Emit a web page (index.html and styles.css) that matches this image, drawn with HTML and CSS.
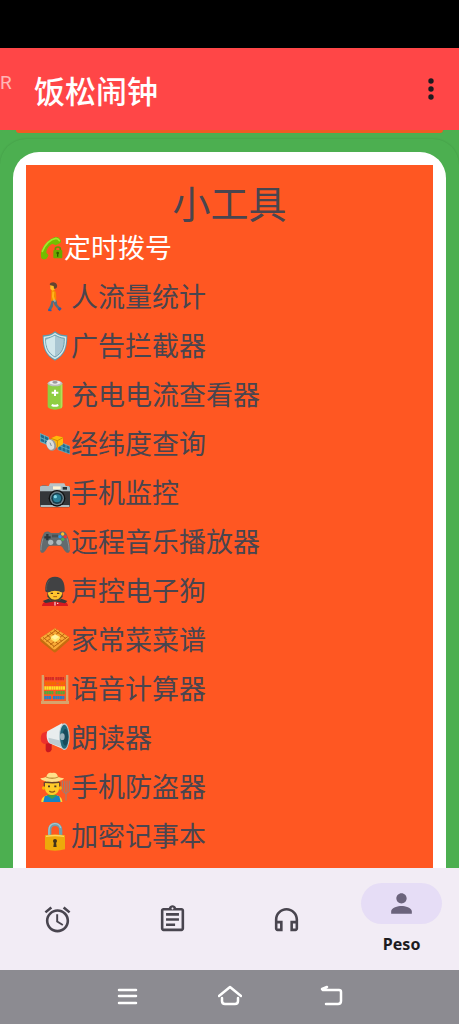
FILE: index.html
```
<!DOCTYPE html>
<html lang="zh-CN">
<head>
    <meta charset="UTF-8">
    <meta name="viewport" content="width=device-width, initial-scale=1.0">
    <title>饭松闹钟</title>
    <link rel="stylesheet" href="styles.css">
</head>
<body>
    <div class="status-bar"></div>
    <header class="app-bar">
        <span class="ticker">R</span>
        <h1>饭松闹钟</h1>
        <button class="menu-button" aria-label="更多">
            <svg viewBox="0 0 8 22"><circle cx="4" cy="3" r="2.7"/><circle cx="4" cy="11" r="2.7"/><circle cx="4" cy="19" r="2.7"/></svg>
        </button>
    </header>

    <main class="content">
        <div class="previous-card"></div>
        <section class="card">
            <div class="card-frame">
                <div class="tools">
                    <h2>小工具</h2>
                    <ul class="tool-list">
                        <li><a class="tool active" href="#dial">
                            <svg class="small-icon" viewBox="0 0 72 72">
                                <path d="M4 66C-3 46 18 12 44 4c9-3 14 1 18 8 2 5 1 8-3 10l-10 5c-5 2-7-4-12-3-10 4-17 15-18 25 0 5 7 5 6 10l-4 7c-3 5-14 6-17 0z" fill="#74bd00"/>
                                <path d="M7 46C16 24 31 10 48 7c5 0 8 3 10 7" fill="none" stroke="#a4e62c" stroke-width="5" stroke-linecap="round"/>
                                <path d="M46 44v-5c0-8 15-8 15 0v5" fill="none" stroke="#5c9900" stroke-width="5"/>
                                <rect x="40" y="42" width="27" height="25" rx="3" fill="#69aa00"/>
                                <circle cx="53" cy="51" r="4" fill="#345c00"/><path d="M51 53h4v9h-4z" fill="#345c00"/>
                            </svg>
                            定时拨号</a></li>
                        <li><a class="tool" href="#people">
                            <svg class="icon" viewBox="0 0 90 90">
                                <path d="M36 53h13l3 15 10 11-6 5-12-14-4-10-1 13-7 13-8-3 7-13z" fill="#536f7f"/>
                                <path d="M26 80l9 4-1 4-10-1zM53 82l7-7 5 5-6 7z" fill="#315aa8"/>
                                <path d="M34 24c7-3 13 1 14 9l1 23H33z" fill="#f58a00"/>
                                <path d="M40 29l-1 15 4 12" fill="none" stroke="#ffb51c" stroke-width="6"/>
                                <path d="M42 53l4 6" stroke="#8eb0b9" stroke-width="5"/>
                                <path d="M31 8h14v14l-7 4-7-5z" fill="#ffbe25"/>
                                <path d="M29 7C31-1 48-2 51 9c2 8-4 13-9 11l-1-8-10-2z" fill="#634331"/>
                            </svg>
                            人流量统计</a></li>
                        <li><a class="tool" href="#adblock">
                            <svg class="icon" viewBox="0 0 90 90">
                                <path d="M45 1C35 10 20 13 8 13c0 37 7 61 37 76 30-15 37-39 37-76C70 13 55 10 45 1z" fill="#5c9db1"/>
                                <path d="M45 5C35 13 23 16 11 17c0 33 7 54 34 68 27-14 34-35 34-68C67 16 55 13 45 5z" fill="#d6e6e9"/>
                                <path d="M45 12c-9 6-18 9-28 10 0 28 6 44 28 56 22-12 28-28 28-56-10-1-19-4-28-10z" fill="#a9c6d2" stroke="#6ca0ae" stroke-width="3"/>
                                <path d="M45 14v62C25 65 19 49 18 27z" fill="#d1e7eb"/>
                            </svg>
                            广告拦截器</a></li>
                        <li><a class="tool" href="#battery">
                            <svg class="icon" viewBox="0 0 90 90">
                                <path d="M23 11h44v67c0 6-9 11-22 11s-22-5-22-11z" fill="#8fce42"/>
                                <path d="M62 13h5v65c0 4-2 6-5 8z" fill="#b2df59"/>
                                <ellipse cx="45" cy="10" rx="22" ry="9" fill="#bdbdbd"/><ellipse cx="45" cy="8" rx="17" ry="6" fill="#eee"/>
                                <ellipse cx="45" cy="7" rx="8" ry="4" fill="#999"/>
                                <path d="M45 29v19M35 38h20M35 75c6 3 14 3 20 0" fill="none" stroke="#fff" stroke-width="6"/>
                            </svg>
                            充电电流查看器</a></li>
                        <li><a class="tool" href="#location">
                            <svg class="icon" viewBox="0 0 90 90">
                                <path d="M0 12l27 12-1 26L0 39z" fill="#6db0bd"/><path d="M2 16l10 4v9L2 25zm12 5l11 5v9l-11-5zM2 28l10 4v8L2 37zm12 5l11 5v8l-11-4zM55 38l35 14-1 23-35-13z" fill="#226c8d"/>
                                <path d="M54 37l36 15v23L54 62zM66 42v24M78 47v24M54 49l36 14" fill="none" stroke="#6fbaca" stroke-width="2"/>
                                <path d="M33 28l16-8 20 5v21L52 56 33 48z" fill="#ffba0a"/><path d="M33 28l19 7 17-9M52 35v20" fill="none" stroke="#d48a00" stroke-width="3"/>
                                <ellipse cx="34" cy="48" rx="14" ry="18" transform="rotate(-22 34 48)" fill="#999"/>
                                <ellipse cx="31" cy="47" rx="11" ry="16" transform="rotate(-22 31 47)" fill="#dadddd"/><path d="M34 51l-4-10" stroke="#829097" stroke-width="3"/>
                            </svg>
                            经纬度查询</a></li>
                        <li><a class="tool" href="#monitor">
                            <svg class="icon" viewBox="0 0 90 90">
                                <path d="M5 22h15v6H5z" fill="#667a83"/><path d="M30 16h43l5 10H25z" fill="#b7c4c8"/>
                                <rect y="24" width="90" height="64" rx="5" fill="#34373a"/><path d="M4 24h82c3 0 4 3 4 6v10H0V28c0-3 2-4 4-4zM2 81h86v6H2z" fill="#aebdc2"/>
                                <rect x="39" y="25" width="23" height="9" fill="#fff3d2"/><rect x="68" y="27" width="13" height="8" fill="#263238"/>
                                <circle cx="51" cy="61" r="25" fill="#111"/><circle cx="51" cy="61" r="21" fill="#71828b"/><circle cx="51" cy="61" r="17" fill="#173d4a"/>
                                <circle cx="51" cy="61" r="12" fill="#287d96"/><circle cx="46" cy="56" r="5" fill="#82d6e6"/>
                            </svg>
                            手机监控</a></li>
                        <li><a class="tool" href="#music">
                            <svg class="icon" viewBox="0 0 90 90">
                                <path d="M14 16c7-5 14-2 19 2h24c6-5 14-6 20-1 9 10 15 44 12 56-4 9-12 4-19-8-4-7-6-9-11-9H31c-5 0-7 2-11 9C13 77 5 82 1 73-2 60 5 25 14 16z" fill="#636b6e"/>
                                <path d="M9 34C5 48 2 62 3 70M81 34c4 14 7 28 6 36" fill="none" stroke="#8b9294" stroke-width="3"/>
                                <path d="M22 21v19M13 31h19" stroke="#303639" stroke-width="7"/><path d="M36 23h18v8H36z" fill="#485052"/>
                                <circle cx="32" cy="46" r="8" fill="#aeb9bc"/><circle cx="57" cy="46" r="8" fill="#aeb9bc"/>
                                <circle cx="68" cy="21" r="5" fill="#fbc02d"/><circle cx="60" cy="29" r="5" fill="#2196f3"/><circle cx="76" cy="29" r="5" fill="#ef3434"/><circle cx="68" cy="37" r="5" fill="#4caf50"/>
                            </svg>
                            远程音乐播放器</a></li>
                        <li><a class="tool" href="#guard">
                            <svg class="icon" viewBox="0 0 90 90">
                                <path d="M6 90c0-11 12-17 26-19h26c15 2 26 8 26 19z" fill="#d71920"/><path d="M8 75l22-8 15 10 15-10 22 8-7 7-30-6-28 5z" fill="#353b3e"/>
                                <path d="M24 43h42v20c-5 17-37 17-42 0z" fill="#ffc52e"/><path d="M22 48c4 16 12 23 23 23s19-7 23-23v14L56 76H34L22 62z" fill="#4a4030"/>
                                <path d="M16 45C15 17 24 2 45 2s30 15 29 43c-5 8-12 3-18 1-9-2-14-2-22 0-6 3-14 6-18-1z" fill="#414244"/>
                                <path d="M28 13c-8 7-9 18-8 29" fill="none" stroke="#555" stroke-width="3"/>
                                <path d="M32 52h7M51 52h7" stroke="#51351d" stroke-width="4"/><path d="M40 62h11" stroke="#a85b15" stroke-width="3"/>
                                <path d="M45 78v11M51 82h4" stroke="#fff" stroke-width="3"/>
                            </svg>
                            声控电子狗</a></li>
                        <li><a class="tool" href="#recipes">
                            <svg class="icon" viewBox="0 0 90 90">
                                <path d="M1 39l44-29 43 27v9L48 81q-4 3-8-1L1 49z" fill="#c56c0f"/><path d="M1 39l44-29 43 27-41 35q-4 3-8 0z" fill="#f9a936"/>
                                <path d="M9 37l33 27M20 29l35 28M31 22l35 27M42 14l36 27M19 50l41-31M31 59l42-32M39 67l44-32M10 43l40-29" fill="none" stroke="#b9640f" stroke-width="3"/>
                                <path d="M32 36l14-9 14 9-1 7-14 9-13-10z" fill="#ffe66b"/><path d="M34 36l12-7 11 7-12 8z" fill="#fff3a1"/>
                            </svg>
                            家常菜菜谱</a></li>
                        <li><a class="tool" href="#calculator">
                            <svg class="icon" viewBox="0 0 90 90">
                                <path d="M9 14h72M9 28h72M9 42h72M9 56h72M9 71h72" stroke="#b17943" stroke-width="2"/>
                                <path d="M15 14h27M46 14h26" stroke="#d52b25" stroke-width="10" stroke-dasharray="6 1"/>
                                <path d="M15 28h34M56 28h19" stroke="#f66a00" stroke-width="10" stroke-dasharray="6 1"/>
                                <path d="M13 42h62" stroke="#ffdf25" stroke-width="10" stroke-dasharray="6 1"/>
                                <path d="M13 56h27M47 56h28" stroke="#55a83b" stroke-width="10" stroke-dasharray="6 1"/>
                                <path d="M13 71h20M39 71h34" stroke="#2381cb" stroke-width="10" stroke-dasharray="6 1"/>
                                <path d="M5 3h7v79H5zM78 3h7v79h-7zM3 81h84v9H3z" fill="#d8a46c"/>
                            </svg>
                            语音计算器</a></li>
                        <li><a class="tool" href="#reader">
                            <svg class="icon" viewBox="0 0 90 90">
                                <path d="M17 59l18-2v22c-2 11-16 12-18 2z" fill="#c91820"/><path d="M24 24L8 30C1 37 1 50 5 58l7 5 18-3z" fill="#ed302c"/>
                                <path d="M22 25L66 1c16 18 20 58 8 79L27 60c-7-8-9-23-5-35z" fill="#e8edee"/><path d="M25 44l39 9v20L28 60z" fill="#bdcbd0"/>
                                <ellipse cx="73" cy="41" rx="16" ry="40" fill="#b7cbd1"/><ellipse cx="73" cy="41" rx="13" ry="36" fill="#22697a"/>
                                <ellipse cx="76" cy="43" rx="9" ry="25" fill="#174b5b"/><ellipse cx="67" cy="41" rx="7" ry="10" fill="#9bb4bd"/>
                            </svg>
                            朗读器</a></li>
                        <li><a class="tool" href="#security">
                            <svg class="icon" viewBox="0 0 90 90">
                                <path d="M4 90c0-16 11-22 32-21 20-1 30 5 31 21z" fill="#fdd835"/><path d="M14 73l11-3 11 7 12-7 10 3 4 17H10z" fill="#1684c4"/>
                                <path d="M20 70l16 11 16-11-16-5z" fill="#43a047"/><path d="M11 30h50v17H11z" fill="#71472e"/>
                                <path d="M15 27h42v24c-4 24-38 24-42 0z" fill="#ffca28"/><circle cx="11" cy="48" r="5" fill="#ffb300"/><circle cx="61" cy="48" r="5" fill="#ffb300"/>
                                <path d="M15 28h42v5c-16 2-29 1-42 0z" fill="#65412b"/>
                                <path d="M1 19c7-2 14-2 18-5C23 3 27 1 36 3c9-3 15 0 18 11 5 3 11 3 18 5-6 8-20 11-36 11S6 27 1 19z" fill="#ffe08a"/>
                                <path d="M18 15c12 5 24 5 37 0" fill="none" stroke="#c5943f" stroke-width="4"/>
                                <path d="M24 43h6M43 43h6" stroke="#4d3728" stroke-width="5"/><path d="M28 57q8 7 17 0" fill="none" stroke="#8d5518" stroke-width="4"/>
                                <path d="M67 26v31q11 14 21 0V26M74 26v35M81 26v35M78 60v26" fill="none" stroke="#92847b" stroke-width="3"/>
                            </svg>
                            手机防盗器</a></li>
                        <li><a class="tool" href="#notes">
                            <svg class="icon" viewBox="0 0 90 90">
                                <path d="M29 47V27c0-23 33-23 33 0v20" fill="none" stroke="#719fac" stroke-width="10"/><path d="M27 45V27C27 3 58 2 62 21" fill="none" stroke="#a6c7cd" stroke-width="4"/>
                                <path d="M15 43q30-5 60 0v42q-30 8-60 0z" fill="#edaa0b"/><path d="M18 46q27-5 54 0" fill="none" stroke="#ffd45a" stroke-width="4"/>
                                <circle cx="45" cy="60" r="6" fill="#41331a"/><path d="M42 62h6l2 16H40z" fill="#41331a"/>
                            </svg>
                            加密记事本</a></li>
                    </ul>
                </div>
            </div>
        </section>
    </main>

    <nav class="tab-bar">
        <a href="#alarm" aria-label="闹钟">
            <svg viewBox="0 0 24 24"><path d="M22 5.72l-4.6-3.86-1.29 1.53 4.6 3.86L22 5.72zM7.88 3.39L6.6 1.86 2 5.71l1.29 1.53 4.59-3.85zM12.5 8H11v6l4.75 2.85.75-1.23-4-2.37V8zM12 4c-4.97 0-9 4.03-9 9s4.02 9 9 9a9 9 0 000-18zm0 16c-3.87 0-7-3.13-7-7s3.13-7 7-7 7 3.13 7 7-3.13 7-7 7z"/></svg>
        </a>
        <a href="#tasks" aria-label="任务">
            <svg viewBox="0 0 24 24"><path d="M7 15h7v2H7zm0-4h10v2H7zm0-4h10v2H7zm12-4h-4.18C14.4 1.84 13.3 1 12 1s-2.4.84-2.82 2H5c-1.1 0-2 .9-2 2v14c0 1.1.9 2 2 2h14c1.1 0 2-.9 2-2V5c0-1.1-.9-2-2-2zm-7-.25c.41 0 .75.34.75.75s-.34.75-.75.75-.75-.34-.75-.75.34-.75.75-.75zM19 19H5V5h14v14z"/></svg>
        </a>
        <a href="#audio" aria-label="音频">
            <svg viewBox="0 0 24 24"><path d="M12 3c-4.97 0-9 4.03-9 9v7c0 1.1.9 2 2 2h4v-8H5v-1c0-3.87 3.13-7 7-7s7 3.13 7 7v1h-4v8h4c1.1 0 2-.9 2-2v-7c0-4.97-4.03-9-9-9zM7 15v4H5v-4h2zm12 4h-2v-4h2v4z"/></svg>
        </a>
        <a class="selected" href="#peso">
            <span class="pill">
                <svg viewBox="0 0 24 24"><path d="M12 12c2.21 0 4-1.79 4-4s-1.79-4-4-4-4 1.79-4 4 1.79 4 4 4zm0 2c-2.67 0-8 1.34-8 4v2h16v-2c0-2.66-5.33-4-8-4z"/></svg>
            </span>
            Peso
        </a>
    </nav>

    <div class="system-bar">
        <button aria-label="最近任务"><svg viewBox="0 0 24 24"><path d="M3 5h17M3 11h17M3 18h17"/></svg></button>
        <button aria-label="主页"><svg viewBox="0 0 24 24"><path d="M1 11L12 2l11 9M4 13v3q0 3 3 3h10q3 0 3-3v-3"/></svg></button>
        <button aria-label="返回"><svg viewBox="0 0 24 24"><path d="M7 2L2 4l1 1h16q2 0 2 2v9q0 3-3 3H6"/></svg></button>
    </div>
</body>
</html>
```

FILE: styles.css
```
:root {
    --red: #ff4647;
    --green: #4caf50;
    --orange: #ff5722;
    --text: #49454f;
    --tab-bg: #f2ecf5;
}

* {
    box-sizing: border-box;
}

body {
    display: flex;
    flex-direction: column;
    height: 100vh;
    margin: 0;
    overflow: hidden;
    background-color: var(--green);
    color: var(--text);
    font-family: "Noto Sans", "Noto Sans CJK SC", sans-serif;
}

h1, h2, ul {
    margin: 0;
    padding: 0;
    font-weight: normal;
}

a {
    color: inherit;
    text-decoration: none;
}

button {
    padding: 0;
    border: none;
    background: none;
}

svg {
    display: block;
}

.status-bar {
    flex: none;
    height: 48px;
    background-color: #000;
}

.app-bar {
    display: flex;
    flex: none;
    align-items: center;
    height: 82px;
    padding-right: 24px;
    background-color: var(--red);
    color: #fff;
}

.ticker {
    width: 34px;
    padding-bottom: 12px;
    font-family: Roboto, sans-serif;
    font-size: 19px;
    line-height: 24px;
    opacity: 0.6;
}

.app-bar h1 {
    flex: 1;
    padding-top: 4px;
    font-size: 31px;
    font-weight: 500;
    line-height: 40px;
}

.menu-button svg {
    width: 8px;
    height: 22px;
    fill: #1d1b20;
}

.content {
    flex: 1;
    min-height: 0;
    overflow: hidden;
}

.previous-card {
    height: 3px;
    margin: 0 16px;
    background-color: #f15a24;
    border-radius: 0 0 12px 12px;
}

.card {
    margin-top: 6px;
    padding: 13px 13px 0;
    border-radius: 26px;
    box-shadow: 0 0 2px rgba(0, 0, 0, 0.15);
}

.card-frame {
    padding: 13px;
    background-color: #fff;
    border-radius: 26px;
}

.tools {
    padding: 12px 14px 24px;
    background-color: var(--orange);
}

.tools h2 {
    font-size: 38px;
    line-height: 52px;
    text-align: center;
}

.tool-list {
    margin-top: -6px;
    list-style: none;
}

.tool {
    display: flex;
    align-items: center;
    height: 49px;
    font-size: 27px;
    line-height: 49px;
    white-space: nowrap;
}

.active {
    color: #fff;
}

.icon {
    width: 30px;
    height: 30px;
    margin-right: 1px;
}

.small-icon {
    width: 24px;
    height: 24px;
}

.tab-bar {
    display: flex;
    flex: none;
    height: 102px;
    background-color: var(--tab-bg);
}

.tab-bar a {
    display: flex;
    flex: 1;
    flex-direction: column;
    align-items: center;
    justify-content: center;
}

.tab-bar svg {
    width: 31px;
    height: 31px;
    fill: var(--text);
}

.tab-bar .selected {
    gap: 8px;
    color: #1d1b20;
    font-size: 16px;
    font-weight: bold;
    line-height: 24px;
}

.pill {
    display: flex;
    align-items: center;
    justify-content: center;
    width: 81px;
    height: 41px;
    background-color: #e6ddf6;
    border-radius: 21px;
}

.tab-bar .pill svg {
    fill: #6b637c;
}

.system-bar {
    display: flex;
    flex: none;
    align-items: center;
    justify-content: center;
    gap: 78px;
    height: 54px;
    background-color: #8c8b91;
}

.system-bar svg {
    width: 24px;
    height: 24px;
    fill: none;
    stroke: #fff;
    stroke-width: 2.5;
    stroke-linecap: round;
    stroke-linejoin: round;
}
```
